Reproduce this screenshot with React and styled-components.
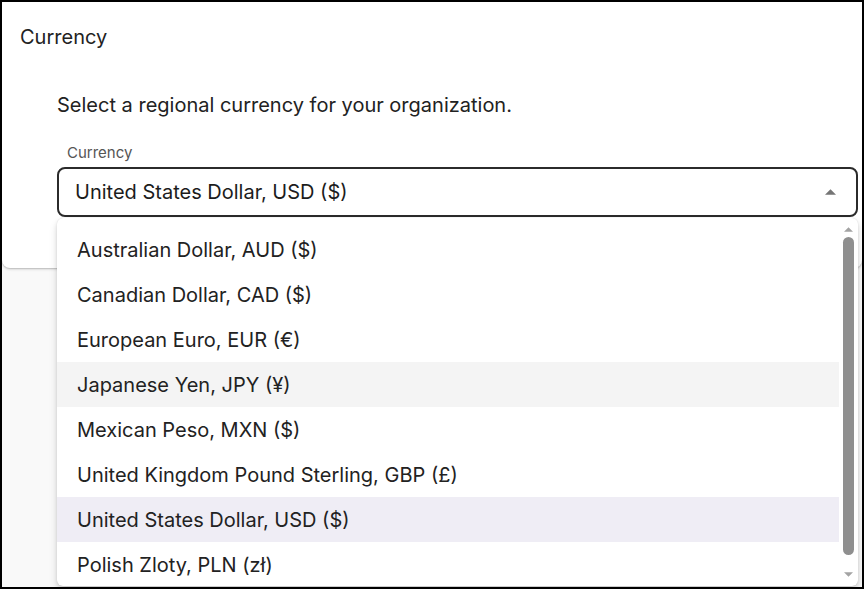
import React from "react";
import styled, { createGlobalStyle } from "styled-components";

const Global = createGlobalStyle`
  html, body { margin: 0; padding: 0; }
  body { font-family: Inter, "Noto Sans", sans-serif; -webkit-font-smoothing: antialiased; }
  * { box-sizing: border-box; }
`;

const Frame = styled.div`
  width: 864px;
  height: 589px;
  border: 2px solid #000;
  background: #f9f9f9;
  overflow: hidden;
`;

const Card = styled.section`
  height: 266px;
  background: #fff;
  border-radius: 0 0 8px 8px;
  box-shadow: 0 1px 3px rgba(0, 0, 0, 0.22), 0 1px 1px rgba(0, 0, 0, 0.08);
`;

const Header = styled.h2`
  margin: 0;
  padding: 23px 18px 0;
  font-size: 20px;
  line-height: 24px;
  font-weight: 400;
  color: #222;
`;

const Body = styled.div`
  padding: 44px 4px 0 55px;
  display: flex;
  flex-direction: column;
`;

const Description = styled.p`
  margin: 0;
  font-size: 20px;
  line-height: 24px;
  color: #222;
`;

const Label = styled.label`
  margin: 27px 0 0 10px;
  font-size: 15px;
  line-height: 18px;
  color: #555;
`;

const Field = styled.div`
  position: relative;
  margin-top: 5px;
`;

const Select = styled.div`
  height: 50px;
  border: 2px solid #2b2b2b;
  border-radius: 8px;
  display: flex;
  align-items: center;
  justify-content: space-between;
  padding: 0 20px 0 16px;
  font-size: 20px;
  color: #1c1c1c;
`;

const Menu = styled.div`
  position: absolute;
  left: 0;
  top: 51px;
  width: 100%;
  height: 368px;
  background: #fff;
  border-radius: 6px;
  box-shadow: 0 5px 8px rgba(0, 0, 0, 0.12), 0 2px 4px rgba(0, 0, 0, 0.1), 0 0 1px rgba(0, 0, 0, 0.15);
  display: flex;
  overflow: hidden;
`;

const List = styled.ul`
  flex: 1;
  margin: 0;
  padding: 9px 0 0;
  list-style: none;
`;

const Item = styled.li`
  height: 45px;
  display: flex;
  align-items: center;
  padding-left: 20px;
  font-size: 20px;
  color: #222;
  background: ${(p) => (p.$selected ? "#efedf5" : p.$hover ? "#f4f4f4" : "transparent")};
`;

const ScrollTrack = styled.div`
  width: 19px;
  display: flex;
  flex-direction: column;
  align-items: center;
  padding: 9px 0 9px;
`;

const Thumb = styled.div`
  flex: 1;
  width: 11px;
  margin: 5px 0 17px;
  border-radius: 6px;
  background: #8f8f8f;
`;

const items = [
  "Australian Dollar, AUD ($)",
  "Canadian Dollar, CAD ($)",
  "European Euro, EUR (€)",
  "Japanese Yen, JPY (¥)",
  "Mexican Peso, MXN ($)",
  "United Kingdom Pound Sterling, GBP (£)",
  "United States Dollar, USD ($)",
  "Polish Zloty, PLN (zł)",
];

const Tri = ({ up, color = "#a3a3a3", w = 9, h = 5 }) => (
  <svg width={w} height={h} viewBox="0 0 10 5" style={{ display: "block" }}>
    <path d={up ? "M0 5 L5 0 L10 5 Z" : "M0 0 L5 5 L10 0 Z"} fill={color} />
  </svg>
);

export default function App() {
  return (
    <>
      <Global />
      <Frame>
        <Card>
          <Header>Currency</Header>
          <Body>
            <Description>Select a regional currency for your organization.</Description>
            <Label>Currency</Label>
            <Field>
              <Select>
                <span>United States Dollar, USD ($)</span>
                <Tri up color="#757575" w={11} h={6} />
              </Select>
              <Menu>
                <List>
                  {items.map((t, i) => (
                    <Item key={t} $hover={i === 3} $selected={i === 6}>
                      {t}
                    </Item>
                  ))}
                </List>
                <ScrollTrack>
                  <Tri up />
                  <Thumb />
                  <Tri />
                </ScrollTrack>
              </Menu>
            </Field>
          </Body>
        </Card>
      </Frame>
    </>
  );
}
